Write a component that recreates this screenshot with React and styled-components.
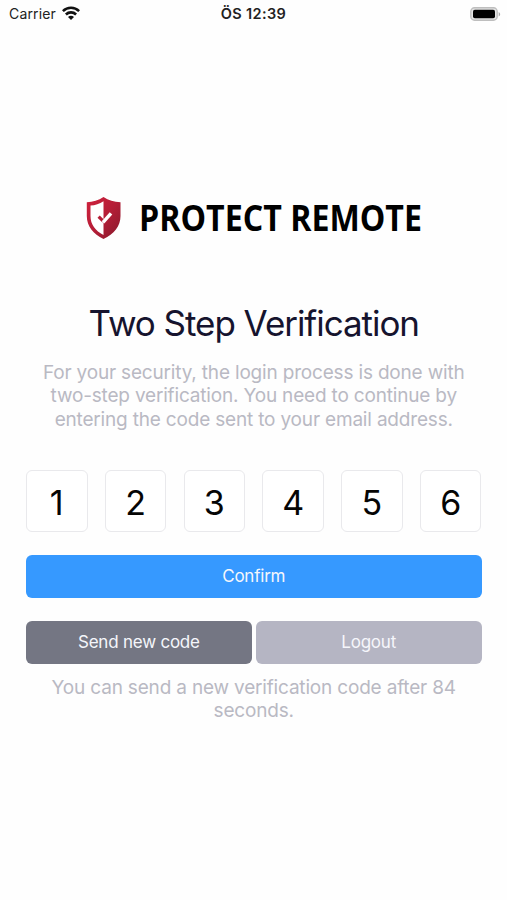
import React from "react";
import styled, { createGlobalStyle } from "styled-components";

const GlobalStyle = createGlobalStyle`
  * { box-sizing: border-box; }
  body { margin: 0; background: #fefefe; }
`;

const Screen = styled.div`
  display: flex;
  flex-direction: column;
  width: 507px;
  height: 900px;
  overflow: hidden;
  background: #fefefe;
  font-family: Inter, "Liberation Sans", sans-serif;
`;

const StatusBar = styled.header`
  display: grid;
  grid-template-columns: 1fr auto 1fr;
  align-items: center;
  height: 27px;
  padding: 0 6px 0 9px;
  color: #222;
  font-size: 14px;
  line-height: 27px;
`;

const Carrier = styled.div`
  display: flex;
  align-items: center;
  gap: 6px;
  letter-spacing: 0.15px;
`;

const Clock = styled.time`
  margin-right: 3px;
  font-size: 14.5px;
  font-weight: 600;
  letter-spacing: 0.35px;
`;

const BatteryIcon = styled.svg`
  justify-self: end;
`;

const Brand = styled.div`
  display: flex;
  align-items: center;
  height: 44px;
  margin: 169px 0 0 86px;
`;

const BrandName = styled.span`
  margin-left: 17px;
  color: #000;
  font-family: "Open Sans", "Noto Sans", sans-serif;
  font-size: 35px;
  font-weight: 700;
  line-height: 44px;
  white-space: nowrap;
  transform: scaleX(0.919);
  transform-origin: left center;
`;

const Content = styled.main`
  display: flex;
  flex-direction: column;
  padding: 0 25.5px 0 26px;
`;

const Title = styled.h1`
  margin: 61px 0 0;
  color: #16142e;
  font-size: 35px;
  font-weight: 400;
  line-height: 44px;
  letter-spacing: -1.05px;
  text-align: center;
  white-space: nowrap;
`;

const Message = styled.p`
  margin: ${({ $top }) => $top}px 0 0;
  color: #b9b9c3;
  font-size: 19px;
  line-height: 23.5px;
  letter-spacing: -0.18px;
  text-align: center;
  white-space: nowrap;
`;

const CodeRow = styled.div`
  display: flex;
  justify-content: space-between;
  margin-top: 38.5px;
`;

const Digit = styled.div`
  display: flex;
  align-items: center;
  justify-content: center;
  width: 61.5px;
  height: 62px;
  padding-top: 3px;
  border: 1px solid #e9e9ec;
  border-radius: 6px;
  background: #fff;
  color: #050505;
  font-size: 34px;
`;

const tones = { primary: "#3699ff", dark: "#747683", muted: "#b5b5c3" };

const Button = styled.button`
  flex: 1;
  height: 43px;
  padding: 0;
  border: 0;
  border-radius: 6px;
  background: ${({ $tone }) => tones[$tone]};
  color: #f5f6fb;
  font-family: inherit;
  font-size: 17px;
  line-height: 43px;
  letter-spacing: -0.22px;
`;

const ButtonRow = styled.div`
  display: flex;
  gap: 4px;
  margin-top: ${({ $top }) => $top}px;
`;

function WifiIcon() {
  return (
    <svg width="18" height="15" viewBox="0 0 18 15" fill="none" stroke="#111" strokeWidth="2.6">
      <path d="M.9 5.100C5.500.7 12.500.7 17.100 5.100" />
      <path d="M3.900 8.500c2.900-2.800 7.300-2.800 10.200 0" />
      <path d="M9 14 6 10.900c1.700-1.500 4.300-1.500 6 0z" fill="#111" stroke="none" />
    </svg>
  );
}

function Battery() {
  return (
    <BatteryIcon width="31" height="14" viewBox="0 0 31 14">
      <rect x="0.8" y="0.8" width="26.4" height="12.4" rx="3.7" fill="#e4e4e4" stroke="#bebebe" strokeWidth="1.4" />
      <rect x="3" y="2.8" width="22" height="8.5" rx="1.8" fill="#000" />
      <path d="M28.7 5v4.4c2-.8 2-3.6 0-4.4z" fill="#aaa" />
    </BatteryIcon>
  );
}

function Shield() {
  return (
    <svg width="36" height="44" viewBox="0 0 36 44">
      <defs>
        <linearGradient id="shield" x1="0" y1="0" x2="1" y2="1">
          <stop offset="0" stopColor="#d0213d" />
          <stop offset="0.5" stopColor="#b51e37" />
          <stop offset="1" stopColor="#86192b" />
        </linearGradient>
      </defs>
      <path d="M17.500 1C12.500 4.500 7 6 .8 6.200V20c0 10.500 6.500 18 16.700 23C28 38 34.500 30.500 34.500 20V6.200C28 6 22.500 4.500 17.500 1z" fill="url(#shield)" />
      <path d="M17.500 5.300C13.500 8 9.200 9.300 4.500 9.600V20c0 8.500 4.800 14.700 13 19z" fill="#fff" />
      <path d="m12.600 20.600 4.900 4.800" stroke="#b51e37" strokeWidth="3.200" fill="none" />
      <path d="m17 26.300 8-9" stroke="#fff" strokeWidth="3.400" fill="none" />
    </svg>
  );
}

export default function App() {
  return (
    <Screen>
      <GlobalStyle />
      <StatusBar>
        <Carrier>Carrier <WifiIcon /></Carrier>
        <Clock>ÖS 12:39</Clock>
        <Battery />
      </StatusBar>
      <Brand>
        <Shield />
        <BrandName>PROTECT REMOTE</BrandName>
      </Brand>
      <Content>
        <Title>Two Step Verification</Title>
        <Message $top={15.5}>
          For your security, the login process is done with<br />
          two-step verification. You need to continue by<br />
          entering the code sent to your email address.
        </Message>
        <CodeRow>
          {[1, 2, 3, 4, 5, 6].map((digit) => <Digit key={digit}>{digit}</Digit>)}
        </CodeRow>
        <ButtonRow $top={23}>
          <Button $tone="primary">Confirm</Button>
        </ButtonRow>
        <ButtonRow $top={23}>
          <Button $tone="dark">Send new code</Button>
          <Button $tone="muted">Logout</Button>
        </ButtonRow>
        <Message $top={12}>
          You can send a new verification code after 84<br />seconds.
        </Message>
      </Content>
    </Screen>
  );
}
